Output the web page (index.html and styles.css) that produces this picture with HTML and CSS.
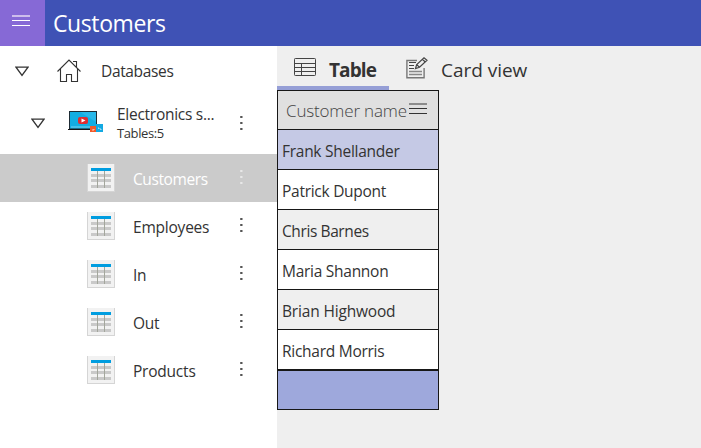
FILE: index.html
```html
<!DOCTYPE html>
<html lang="en">
<head>
<meta charset="utf-8">
<title>Customers</title>
<link rel="stylesheet" href="styles.css">
</head>
<body>
<svg class="defs" width="0" height="0">
  <symbol id="table" viewBox="0 0 28 28">
    <path fill="#f2f2f2" d="M0 0h28v28H0z"/>
    <path class="edge" d="M0 0h1v28H0zM27 0h1v28h-1zM0 27h28v1H0z"/>
    <path fill="#009de0" d="M4 4h20v3H4z"/>
    <path fill="#c9c9c9" d="M4 10h20v3H4zM4 15h20v3H4zM4 21h20v3H4z"/>
    <path fill="#a3a69c" d="M10 7h1v17h-1zM17 7h1v17h-1z"/>
  </symbol>
  <symbol id="dots" viewBox="0 0 4 16">
    <path d="M1.200 1h2.300v2H1.200zM1.200 7h2.300v2H1.200zM1.200 13h2.300v2H1.200z" fill="currentColor"/>
  </symbol>
  <symbol id="arrow" viewBox="0 0 14 11">
    <path d="M1 1.200h12L7 9.400z" fill="none" stroke="#333" stroke-width="1.300"/>
  </symbol>
</svg>
<header class="topbar">
  <button class="menu" aria-label="Menu"><svg width="18" height="12"><path d="M0 0h18v2H0z" fill="#cdbdec"/><path d="M0 5h18v1H0zM0 10h18v1H0z" fill="#fff"/></svg></button>
  <h1>Customers</h1>
</header>
<div class="body">
  <nav class="side">
    <div class="root">
      <svg class="arrow" width="14" height="11"><use href="#arrow"/></svg>
      <svg class="home" width="24" height="24" viewBox="0 0 24 24" fill="none" stroke="#333" stroke-width="1.100"><path d="M.5 12.500 12 1l11.500 11.500M3.500 10v12.500h6v-7h5v7h6V10M16 2.500h3.500V8"/></svg>
      <span class="db">Databases</span>
    </div>
    <div class="store">
      <svg class="arrow" width="14" height="11"><use href="#arrow"/></svg>
      <svg class="laptop" width="36" height="24" viewBox="0 0 36 24">
        <path d="M1 0h28v18H1z" fill="#1e2c35"/><path d="M2 1h26v16.500H2z" fill="#12aee3"/><path d="M28 1v10L12 1z" fill="#28b8ea"/>
        <path d="M0 18h24v1H0z" fill="#151515"/><path d="M3 16h19" stroke="#9bdcf2" stroke-width=".8"/>
        <rect x="10" y="6" width="10" height="7" rx="2" fill="#dd2e32"/><path d="m13.500 7.500 4 2-4 2z" fill="#fff"/>
        <path d="M22 15h6v6h-6z" fill="#f15a29"/><path d="M28 13h7v8h-7z" fill="#13a9e2"/><path d="M24 19h2v-1M30 17h1v1M32 18h1v1" stroke="#fff" stroke-width=".7" fill="none"/>
      </svg>
      <div class="info"><span class="name">Electronics s...</span><span class="count">Tables:5</span></div>
      <svg class="dots" width="4" height="16"><use href="#dots"/></svg>
    </div>
    <div class="item active"><svg class="ticon" width="28" height="28"><use href="#table"/></svg><span class="tight">Customers</span><svg class="dots" width="4" height="16"><use href="#dots"/></svg></div>
    <div class="item"><svg class="ticon" width="28" height="28"><use href="#table"/></svg><span>Employees</span><svg class="dots" width="4" height="16"><use href="#dots"/></svg></div>
    <div class="item"><svg class="ticon" width="28" height="28"><use href="#table"/></svg><span>In</span><svg class="dots" width="4" height="16"><use href="#dots"/></svg></div>
    <div class="item"><svg class="ticon" width="28" height="28"><use href="#table"/></svg><span>Out</span><svg class="dots" width="4" height="16"><use href="#dots"/></svg></div>
    <div class="item"><svg class="ticon" width="28" height="28"><use href="#table"/></svg><span>Products</span><svg class="dots" width="4" height="16"><use href="#dots"/></svg></div>
  </nav>
  <main>
    <div class="tabs">
      <div class="tab selected">
        <svg width="22" height="18" viewBox="0 0 22 18" fill="none" stroke="#444"><rect x=".5" y=".5" width="21" height="17" rx=".8"/><path d="M1 5.500h20M1 9.500h20M1 13.500h20M7.500 5v12.500"/></svg>
        <span>Table</span>
      </div>
      <div class="tab card">
        <svg width="22" height="22" viewBox="0 0 22 22" fill="none" stroke="#444"><path d="M11 3.500H.9v17.200h17.200V11" stroke="#777" stroke-width="1.400"/><path d="M3 5.500h7M3 8.500h5M3 11.500h5"/><path d="M3 14.500h13M3 17.500h13" stroke="#888" stroke-width="1.300"/><path d="m9.500 11.500 1.200-4L18 .8l3 2.500-7.500 7zM16.300 2.300l3 2.700M10.700 7.500l2.800 2.800" stroke-width="1.200"/></svg>
        <span>Card view</span>
      </div>
    </div>
    <div class="grid">
      <div class="head"><span>Customer name</span><svg width="18" height="12"><path d="M0 0h18v2H0z" fill="#8c8c8c"/><path d="M0 5h18v1H0zM0 10h18v1H0z" fill="#333"/></svg></div>
      <div class="row current">Frank Shellander</div>
      <div class="row">Patrick Dupont</div>
      <div class="row alt tight">Chris Barnes</div>
      <div class="row">Maria Shannon</div>
      <div class="row alt loose">Brian Highwood</div>
      <div class="row last">Richard Morris</div>
      <div class="foot"></div>
    </div>
  </main>
</div>
</body>
</html>
```
FILE: styles.css
```css
* { box-sizing: border-box; }
body { margin: 0; width: 701px; height: 448px; overflow: hidden; background: #fff; color: #333; font: 15.5px/20px "Open Sans", "Noto Sans", sans-serif; white-space: nowrap; }
svg { display: block; flex: none; }
.defs { position: absolute; }
.topbar { height: 46px; display: flex; background: #3f52b5; color: #fff; }
.menu { width: 45px; padding: 15px 0 0 12px; border: 0; background: #8669d6; display: flex; align-items: flex-start; }
h1 { margin: 0; padding: 8px 0 0 8px; font-size: 23px; line-height: 31px; font-weight: 400; letter-spacing: -.4px; }
.body { display: flex; height: 402px; }
.side { width: 277px; }
.root { height: 50px; padding-left: 15px; display: flex; align-items: center; }
.home { margin-left: 28px; }
.db { margin-left: 20px; letter-spacing: -.35px; }
.store { height: 58px; padding: 0 34px 4px 31px; display: flex; align-items: center; }
.laptop { margin: 0 0 0 23px; }
.info { margin-left: 13px; display: flex; flex-direction: column; }
.count { font-size: 13px; line-height: 18px; letter-spacing: -.4px; }
.name { letter-spacing: -.27px; }
.dots { margin-left: auto; color: #555; }
.item { height: 48px; padding: 0 34px 0 87px; display: flex; align-items: center; letter-spacing: -.22px; }
.item span { margin: 1px 0 0 18px; }
.item .dots { margin-top: -2px; }
.active { background: #cbcbcb; color: #fff; }
.active .dots { color: #e8e8e8; }
.edge { fill: #d5d5d5; }
.active .edge { fill: #aaa; }
main { flex: 1; background: #efefef; }
.tabs { height: 44px; display: flex; font-size: 19px; line-height: 26px; }
.tab { display: flex; align-items: flex-start; padding: 12px 0 0 17px; }
.tab span { margin: -1px 0 0 13px; }
.selected { width: 112px; border-bottom: 4px solid #969fd6; font-weight: 700; letter-spacing: -.9px; }
.card { padding-top: 11px; }
.card span { margin-top: 0; letter-spacing: -.03px; }
.grid { width: 162px; border: 1px solid #171717; border-bottom: 0; }
.head, .row, .foot { border-bottom: 1px solid #171717; }
.head { height: 39px; padding: 0 11px 0 8px; background: #e0e0e0; color: #444; display: flex; align-items: center; justify-content: space-between; font-size: 17px; font-weight: 300; letter-spacing: -.16px; }
.head span { padding-top: 2px; }
.head svg { margin-top: -2px; }
.row { height: 40px; padding: 11px 0 0 4px; background: #fff; letter-spacing: -.27px; }
.alt { background: #efefef; }
.tight { letter-spacing: -.4px; }
.loose { letter-spacing: -.17px; }
.current { background: #c5c9e5; }
.last { height: 41px; border-bottom-width: 2px; }
.foot { height: 39px; background: #9ea8dc; }
```
